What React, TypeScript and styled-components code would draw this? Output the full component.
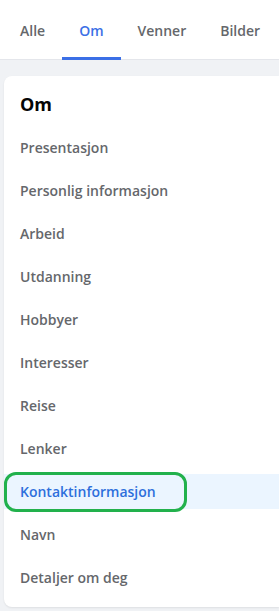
import React from "react";
import styled, {createGlobalStyle} from "styled-components";

const GlobalStyle = createGlobalStyle`
  body {
    margin: 0;
    background: #f0f2f5;
    font-family: "Segoe UI", "Open Sans", "Noto Sans", sans-serif;
  }
`;

const Page = styled.div`
  width: 279px;
  min-height: 611px;
  overflow: hidden;
  background: #f0f2f5;
`;

const TabBar = styled.div`
  display: flex;
  height: 60px;
  padding-left: 3px;
  background: #ffffff;
  border-bottom: 1px solid #e4e6eb;
  box-sizing: border-box;
`;

const Tab = styled.div<{ $active?: boolean }>`
  display: flex;
  align-items: center;
  padding: 3px 17px 0;
  border-bottom: 3px solid ${p => (p.$active ? "#3b6fe6" : "transparent")};
  margin-bottom: -1px;
  font-size: 14px;
  font-weight: 600;
  color: ${p => (p.$active ? "#3b6fe6" : "#65676b")};
  white-space: nowrap;
`;

const Content = styled.div`
  padding: 16px 0 3px 4px;
`;

const Card = styled.div`
  display: flex;
  flex-direction: column;
  gap: 8px;
  background: #ffffff;
  border-radius: 8px 0 0 8px;
  padding: 16px 0 12px;
  box-shadow: 0 1px 2px rgba(0, 0, 0, 0.08);
`;

const Title = styled.div`
  padding: 0 16px;
  margin-bottom: 6px;
  height: 24px;
  line-height: 24px;
  font-size: 18px;
  font-weight: 700;
  color: #050505;
`;

const Item = styled.div<{ $active?: boolean }>`
  position: relative;
  display: flex;
  align-items: center;
  height: 35px;
  padding: 0 16px;
  font-size: 14px;
  font-weight: 600;
  color: ${p => (p.$active ? "#2d6fdc" : "#65676b")};
  background: ${p => (p.$active ? "#ebf5ff" : "transparent")};
`;

const Marker = styled.span`
  position: absolute;
  left: 0;
  top: -2px;
  width: 183px;
  height: 40px;
  box-sizing: border-box;
  border: 3px solid #22b14c;
  border-radius: 12px;
`;

const tabs = ["Alle", "Om", "Venner", "Bilder"];
const items = [
    "Presentasjon",
    "Personlig informasjon",
    "Arbeid",
    "Utdanning",
    "Hobbyer",
    "Interesser",
    "Reise",
    "Lenker",
    "Kontaktinformasjon",
    "Navn",
    "Detaljer om deg",
];

export default function App() {
    return (
        <Page>
            <GlobalStyle/>
            <TabBar>
                {tabs.map(t => (
                    <Tab key={t} $active={t === "Om"}>{t}</Tab>
                ))}
            </TabBar>
            <Content>
                <Card>
                    <Title>Om</Title>
                    {items.map(i => {
                        const active = i === "Kontaktinformasjon";
                        return (
                            <Item key={i} $active={active}>
                                {i}
                                {active && <Marker/>}
                            </Item>
                        );
                    })}
                </Card>
            </Content>
        </Page>
    );
}
